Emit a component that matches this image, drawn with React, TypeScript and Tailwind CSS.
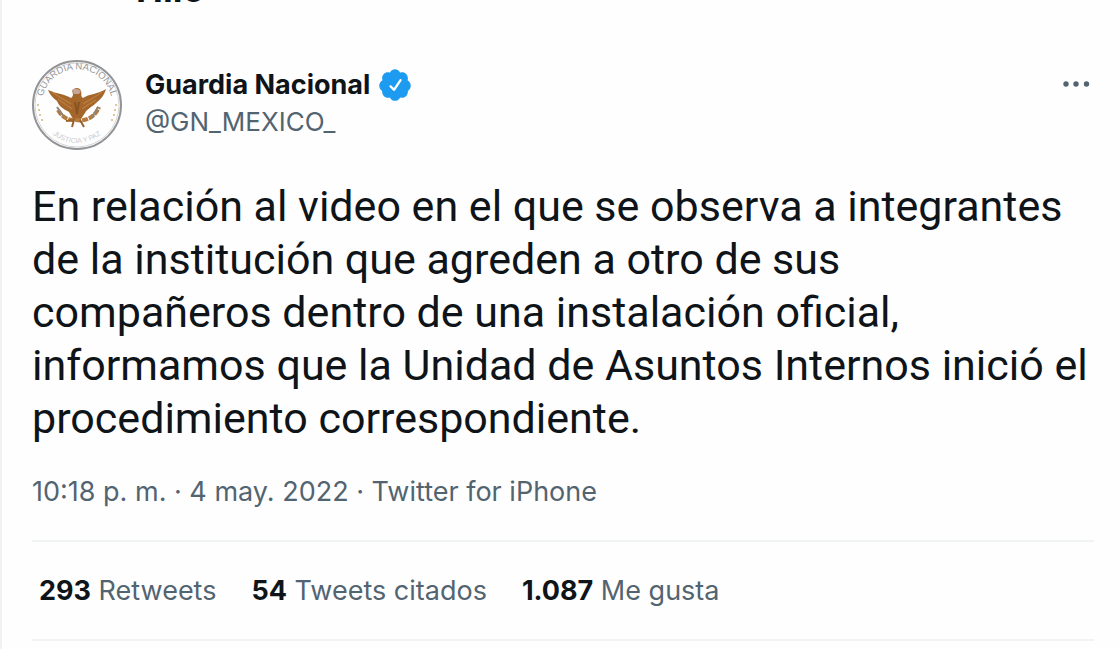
import React from "react";

function Avatar() {
  return (
    <svg viewBox="0 0 90 90" className="size-[90px] shrink-0" role="img" aria-label="Guardia Nacional">
      <defs>
        <path id="top-arc" d="M12 56 A35 35 0 1 1 78 56" />
        <path id="bottom-arc" d="M7 45 A38 38 0 0 0 83 45" />
      </defs>
      <circle cx="45" cy="45" r="44" fill="#fefefe" stroke="#939497" strokeWidth="2" />
      <circle cx="45" cy="45" r="42" fill="none" stroke="#d5d6d8" strokeWidth="1" />
      <text fontSize="9.500" fill="#96989b" fontFamily="Liberation Sans, sans-serif" textAnchor="middle">
        <textPath href="#top-arc" startOffset="50%">GUARDIA NACIONAL</textPath>
      </text>
      <text fontSize="7" fill="#c9cacc" fontFamily="Liberation Sans, sans-serif" textAnchor="middle">
        <textPath href="#bottom-arc" startOffset="50%">JUSTICIA Y PAZ</textPath>
      </text>
      <g fill="#d9b377">
        <circle cx="6" cy="45" r="1" /><circle cx="7" cy="50" r="1" /><circle cx="8" cy="55" r="1" /><circle cx="10" cy="60" r="1" />
        <circle cx="84" cy="45" r="1" /><circle cx="83" cy="50" r="1" /><circle cx="82" cy="55" r="1" /><circle cx="80" cy="60" r="1" />
      </g>
      <path d="M16 30 C25 34 33 34 39 38 C42 36 41 33 40 31 C42 27 48 27 49 31 C50 34 48 36 51 38 C57 34 66 34 74 29 C72 36 68 40 64 43 C60 47 55 49 53 53 L49 59 L41 59 L37 52 C31 49 27 46 25 41 C21 38 18 35 16 30Z" fill="#a4662b" />
      <path d="M20 32 C28 38 33 40 39 44 M26 39 C31 43 35 45 40 49 M70 32 C62 38 57 40 51 44 M64 40 C59 43 55 45 50 49" fill="none" stroke="#b97c3c" strokeWidth="1.500" />
      <path d="M40 30 Q44 27 49 31 L47 34 L42 34Z" fill="#c7a596" />
      <path d="M43 42 L45 54 L47 42" fill="none" stroke="#8a5323" strokeWidth="2" />
      <path d="M26 50 C30 57 36 61 44 60 C54 62 63 57 67 47" fill="none" stroke="#b57a3c" strokeWidth="4" strokeDasharray="6 1" />
      <path d="M25 47 L32 57 M66 47 L60 58" stroke="#8f877d" strokeWidth="2" />
      <path d="M34 61 L42 60 L40 67 M48 60 L52 67" fill="none" stroke="#9b612d" strokeWidth="2" />
    </svg>
  );
}

function VerifiedBadge() {
  return (
    <svg viewBox="0 0 24 24" className="size-[36px] shrink-0" role="img" aria-label="Cuenta verificada">
      <path
        fill="#1d9bf0"
        d="M22.5 12.5c0-1.58-.875-2.95-2.148-3.6.154-.435.238-.905.238-1.4 0-2.21-1.71-3.998-3.818-3.998-.47 0-.92.084-1.336.25C14.818 2.415 13.51 1.5 12 1.5s-2.816.917-3.437 2.25c-.415-.165-.866-.25-1.336-.25-2.11 0-3.818 1.79-3.818 4 0 .494.083.964.237 1.4-1.272.65-2.147 2.018-2.147 3.6 0 1.495.782 2.798 1.942 3.486-.02.17-.032.34-.032.514 0 2.21 1.708 4 3.818 4 .47 0 .92-.086 1.335-.25.62 1.334 1.926 2.25 3.437 2.25 1.512 0 2.818-.916 3.437-2.25.415.163.865.248 1.336.248 2.11 0 3.818-1.79 3.818-4 0-.174-.012-.344-.033-.513 1.158-.687 1.943-1.99 1.943-3.484z"
      />
      <path
        fill="#fff"
        d="M16.334 9.17l-4.334 6.5c-.145.217-.382.334-.625.334-.143 0-.288-.04-.416-.126l-.115-.094-2.415-2.415c-.293-.293-.293-.768 0-1.06s.768-.294 1.06 0l1.77 1.767 3.825-5.74c.23-.345.696-.436 1.04-.207.346.23.44.696.21 1.04z"
      />
    </svg>
  );
}

const stats = [
  { value: "293", label: "Retweets" },
  { value: "54", label: "Tweets citados" },
  { value: "1.087", label: "Me gusta" },
];

export default function App() {
  return (
    <main className="min-h-screen border-l-2 border-[#eff3f4] bg-[#fefefe] pr-[26px] pl-[30px] font-['Inter',sans-serif] text-[#0f1419]">
      <header className="h-[60px] overflow-hidden pl-[104px]">
        <h1 className="-mt-[33px] text-[36px] leading-[44px] font-bold">Hilo</h1>
      </header>
      <article>
        <div className="flex items-start">
          <Avatar />
          <div className="ml-[23px] pt-[5px]">
            <div className="flex items-center gap-[7px]">
              <a href="#perfil" className="text-[27px] leading-[40px] font-bold">Guardia Nacional</a>
              <VerifiedBadge />
            </div>
            <a href="#perfil" className="block text-[26px] leading-[34px] text-[#536471]">@GN_MEXICO_</a>
          </div>
          <button type="button" aria-label="Más opciones" className="mt-2 ml-auto flex h-8 items-center">
            <svg viewBox="0 0 32 32" className="size-8" fill="#536471">
              <circle cx="4" cy="16" r="2.700" /><circle cx="14" cy="16" r="2.700" /><circle cx="24.500" cy="16" r="2.700" />
            </svg>
          </button>
        </div>
        <p className="mt-[30px] font-['Roboto',sans-serif] text-[43px] leading-[53px]">
          En relación al video en el que se observa a integrantes
          <br />de la institución que agreden a otro de sus
          <br />compañeros dentro de una instalación oficial,
          <br />informamos que la Unidad de Asuntos Internos inició el
          <br />procedimiento correspondiente.
        </p>
        <p className="mt-[29px] text-[27px] leading-[36px] text-[#536471]">
          <time dateTime="2022-05-04T22:18">10:18 p. m. · 4 may. 2022</time> · <a href="#fuente">Twitter for iPhone</a>
        </p>
        <div className="mt-[30px] flex gap-[35px] border-y-2 border-[#eff3f4] px-[7px] pt-[30px] pb-[29px] text-[27px] leading-[38px]">
          {stats.map((s) => (
            <a key={s.label} href="#detalle" className="text-[#536471]">
              <strong className="font-bold text-[#0f1419]">{s.value}</strong> {s.label}
            </a>
          ))}
        </div>
      </article>
    </main>
  );
}
